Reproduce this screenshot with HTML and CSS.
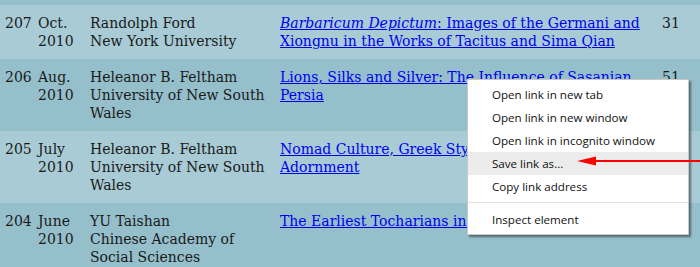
FILE: index.html
```html
<!DOCTYPE html>
<html>
<head>
<meta charset="utf-8">
<link rel="stylesheet" href="styles.css">
</head>
<body>
<div class="list">
  <div class="row light">
    <div class="num">207</div>
    <div class="date">Oct.<br><span class="yr">2010</span></div>
    <div class="author">Randolph Ford<br>New York University</div>
    <div class="title"><a href="#"><i>Barbaricum Depictum</i>: Images of the Germani and<br>Xiongnu in the Works of Tacitus and Sima Qian</a></div>
    <div class="pages">31</div>
  </div>
  <div class="row dark">
    <div class="num">206</div>
    <div class="date">Aug.<br><span class="yr">2010</span></div>
    <div class="author">Heleanor B. Feltham<br>University of New South<br>Wales</div>
    <div class="title"><a href="#">Lions, Silks and Silver: The Influence of Sasanian<br>Persia</a></div>
    <div class="pages">51</div>
  </div>
  <div class="row light">
    <div class="num">205</div>
    <div class="date">July<br><span class="yr">2010</span></div>
    <div class="author">Heleanor B. Feltham<br>University of New South<br>Wales</div>
    <div class="title"><a href="#">Nomad Culture, Greek Style, and the Art of Personal<br>Adornment</a></div>
    <div class="pages">39</div>
  </div>
  <div class="row dark">
    <div class="num">204</div>
    <div class="date">June<br><span class="yr">2010</span></div>
    <div class="author">YU Taishan<br>Chinese Academy of<br>Social Sciences</div>
    <div class="title"><a href="#">The Earliest Tocharians in China</a></div>
    <div class="pages">71</div>
  </div>
</div>

<div class="menu">
  <div class="item">Open link in new tab</div>
  <div class="item">Open link in new window</div>
  <div class="item">Open link in incognito window</div>
  <div class="item hover">Save link as...</div>
  <div class="item">Copy link address</div>
  <div class="sep"></div>
  <div class="item">Inspect element</div>
</div>

<svg class="arrow" width="125" height="14" viewBox="0 0 125 14">
  <line x1="18" y1="7" x2="125" y2="7" stroke="#ff0000" stroke-width="2"/>
  <polygon points="2,7 21,2.5 21,11.5" fill="#ff0000"/>
</svg>
</body>
</html>
```

FILE: styles.css
```css
html, body {
  margin: 0;
  padding: 0;
}
body {
  background: #94bfcb;
  width: 700px;
  height: 267px;
  overflow: hidden;
  position: relative;
  font-family: "DejaVu Serif", "Liberation Serif", serif;
  font-size: 14px;
  line-height: 18px;
  color: #1a1a1a;
}
.list {
  padding-top: 5px;
}
.row {
  display: grid;
  grid-template-columns: 38px 52px 190px 1fr 40px;
  padding: 9px 0;
}
.light {
  background: #a8cbd5;
}
.dark {
  background: #94bfcb;
}
.num {
  padding-left: 5px;
}
.title a {
  color: #0000ee;
  text-decoration: underline;
}
.pages {
  padding-left: 2px;
}
.menu {
  position: absolute;
  left: 467px;
  top: 79px;
  width: 220px;
  padding: 3px 0;
  background: #ffffff;
  border: 1px solid #c8c8c8;
  box-shadow: 2px 2px 2px rgba(0, 0, 0, 0.45);
  font-family: "Open Sans", "Noto Sans", sans-serif;
  font-size: 11.6px;
  color: #111111;
}
.item {
  height: 23px;
  line-height: 23px;
  padding-left: 24px;
}
.hover {
  background: #ececec;
}
.sep {
  height: 1px;
  background: #e3e3e3;
  margin: 4px 0 5px;
}
.arrow {
  position: absolute;
  left: 575px;
  top: 154px;
}
```
